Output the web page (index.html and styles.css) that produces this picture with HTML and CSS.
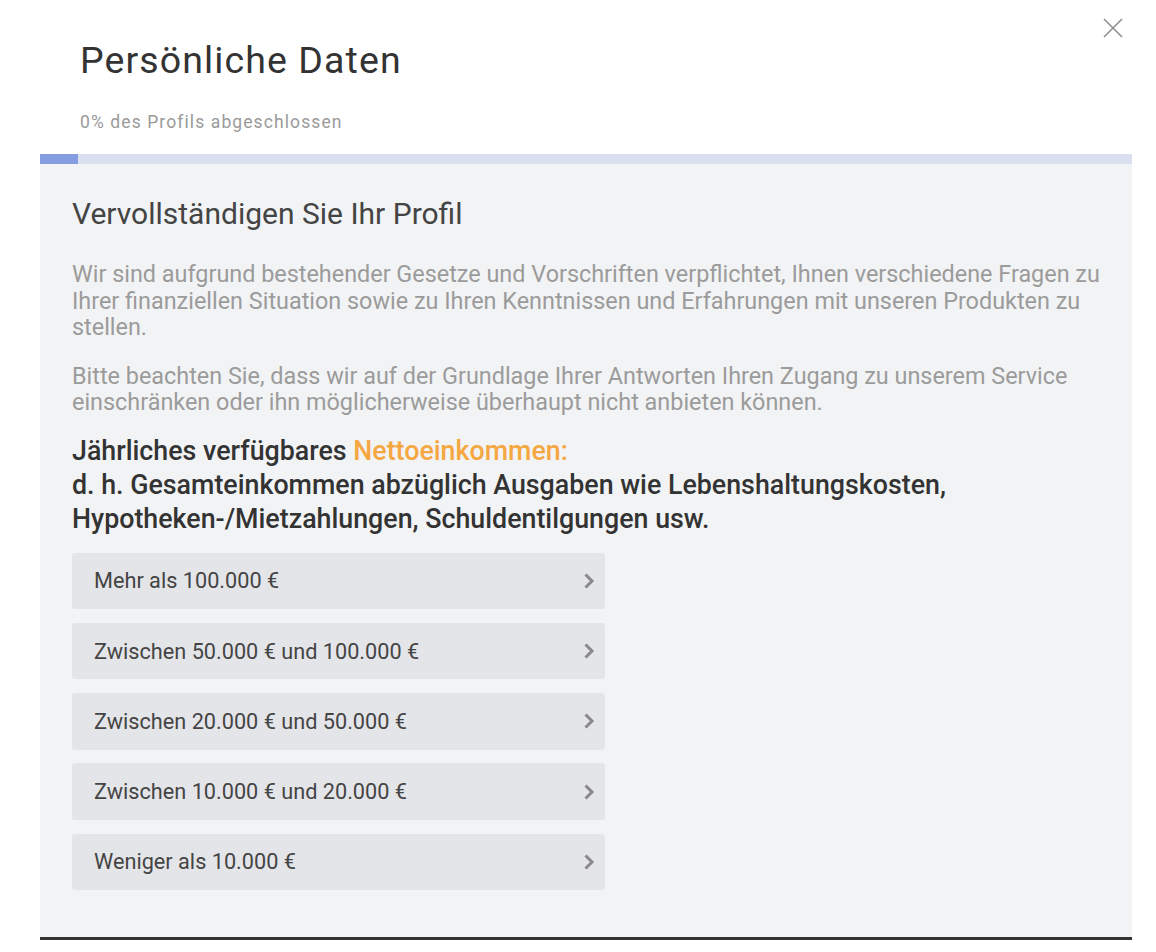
FILE: index.html
```html
<!DOCTYPE html>
<html lang="de">
<head>
<meta charset="utf-8">
<link rel="stylesheet" href="styles.css">
</head>
<body>
<div class="modal">
  <button class="close" aria-label="Schließen">
    <svg width="22" height="22" viewBox="0 0 22 22"><path d="M2 2L20 20M20 2L2 20" stroke="#8f8f8f" stroke-width="1.6" fill="none"/></svg>
  </button>
  <header class="head">
    <h1 class="title">Persönliche Daten</h1>
    <p class="progress-label">0% des Profils abgeschlossen</p>
  </header>
  <div class="progress"><div class="progress-fill" style="width:38px"></div></div>
  <section class="panel">
    <h2 class="panel-title">Vervollständigen Sie Ihr Profil</h2>
    <p class="text">Wir sind aufgrund bestehender Gesetze und Vorschriften verpflichtet, Ihnen verschiedene Fragen zu Ihrer finanziellen Situation sowie zu Ihren Kenntnissen und Erfahrungen mit unseren Produkten zu stellen.</p>
    <p class="text second">Bitte beachten Sie, dass wir auf der Grundlage Ihrer Antworten Ihren Zugang zu unserem Service einschränken oder ihn möglicherweise überhaupt nicht anbieten können.</p>
    <h3 class="question">Jährliches verfügbares <span class="accent">Nettoeinkommen:</span><br>d. h. Gesamteinkommen abzüglich Ausgaben wie Lebenshaltungskosten, Hypotheken-/Mietzahlungen, Schuldentilgungen usw.</h3>
    <ul class="options">
      <li class="option"><span>Mehr als 100.000 €</span><svg class="chev" width="12" height="18" viewBox="0 0 12 18"><path d="M2.5 2.5L9 9L2.5 15.5" stroke="#8a8a8a" stroke-width="3" fill="none"/></svg></li>
      <li class="option"><span>Zwischen 50.000 € und 100.000 €</span><svg class="chev" width="12" height="18" viewBox="0 0 12 18"><path d="M2.5 2.5L9 9L2.5 15.5" stroke="#8a8a8a" stroke-width="3" fill="none"/></svg></li>
      <li class="option"><span>Zwischen 20.000 € und 50.000 €</span><svg class="chev" width="12" height="18" viewBox="0 0 12 18"><path d="M2.5 2.5L9 9L2.5 15.5" stroke="#8a8a8a" stroke-width="3" fill="none"/></svg></li>
      <li class="option"><span>Zwischen 10.000 € und 20.000 €</span><svg class="chev" width="12" height="18" viewBox="0 0 12 18"><path d="M2.5 2.5L9 9L2.5 15.5" stroke="#8a8a8a" stroke-width="3" fill="none"/></svg></li>
      <li class="option"><span>Weniger als 10.000 €</span><svg class="chev" width="12" height="18" viewBox="0 0 12 18"><path d="M2.5 2.5L9 9L2.5 15.5" stroke="#8a8a8a" stroke-width="3" fill="none"/></svg></li>
    </ul>
  </section>
</div>
</body>
</html>
```

FILE: styles.css
```css
html, body {
  margin: 0;
  padding: 0;
  background: #ffffff;
  font-family: Roboto, "Liberation Sans", Arial, sans-serif;
}
.modal {
  position: relative;
  margin: 0 24px 0 40px;
}
.close {
  position: absolute;
  top: 17px;
  right: 8px;
  background: none;
  border: 0;
  padding: 0;
  cursor: pointer;
}
.close svg { display: block; }
.head {
  padding: 38px 40px 0 40px;
}
.title {
  margin: 0;
  font-size: 37.5px;
  line-height: 44px;
  font-weight: 400;
  letter-spacing: 1.1px;
  color: #333333;
}
.progress-label {
  margin: 28px 0 0 0;
  font-size: 17.5px;
  line-height: 24px;
  letter-spacing: 1.1px;
  color: #9a9a9a;
}
.progress {
  margin-top: 20px;
  height: 10px;
  background: #dbe0f0;
}
.progress-fill {
  height: 100%;
  background: #879de2;
}
.panel {
  background: #f2f3f5;
  padding: 34px 32px 47px 32px;
  border-bottom: 3px solid #333333;
}
.panel-title {
  margin: 0;
  font-size: 30px;
  line-height: 32px;
  font-weight: 400;
  color: #444444;
}
.text {
  margin: 31px 0 0 0;
  font-size: 23.4px;
  line-height: 26.5px;
  color: #9b9b9b;
}
.text.second {
  margin-top: 22px;
}
.question {
  margin: 18px 0 0 0;
  font-size: 26.8px;
  line-height: 34px;
  font-weight: 500;
  color: #333333;
}
.accent {
  color: #f5a742;
}
.options {
  list-style: none;
  margin: 17px 0 0 0;
  padding: 0;
  width: 533px;
  display: flex;
  flex-direction: column;
  gap: 13.75px;
}
.option {
  height: 56.5px;
  background: #e4e5e9;
  border-radius: 3px;
  display: flex;
  align-items: center;
  justify-content: space-between;
  padding: 0 10px 0 22px;
  font-size: 21.7px;
  color: #444444;
}
.chev { display: block; }
```
